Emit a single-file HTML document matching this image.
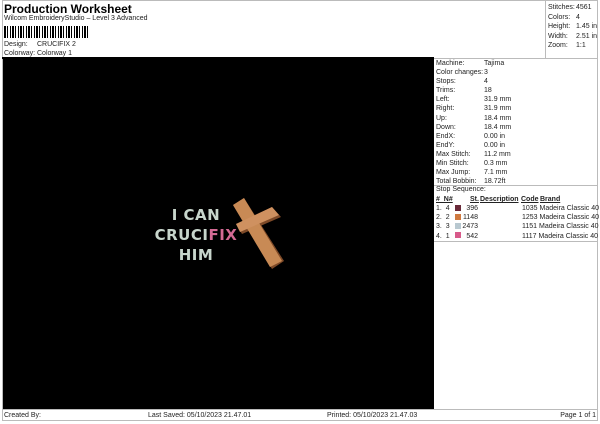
<!DOCTYPE html>
<html><head><style>
body{margin:0;width:600px;height:424px;background:#fff;font-family:"Liberation Sans",sans-serif;font-size:7px;color:#222;position:relative;overflow:hidden}
.a{position:absolute;white-space:nowrap}
.ln{position:absolute;background:#bbb}
</style></head><body>
<div class="a" style="left:4px;top:2px;font-size:12px;font-weight:bold;color:#000">Production Worksheet</div>
<div class="a" style="left:4px;top:15px">Wilcom EmbroideryStudio – Level 3 Advanced</div>
<div class="a" style="left:4px;top:26px;width:86px;height:12px;background:repeating-linear-gradient(90deg,#000 0 2px,#fff 2px 3px,#000 3px 4px,#fff 4px 6px,#000 6px 7px,#fff 7px 8px)"></div>
<div class="a" style="left:4px;top:41px">Design:</div><div class="a" style="left:37px;top:41px">CRUCIFIX 2</div>
<div class="a" style="left:4px;top:50px">Colorway:</div><div class="a" style="left:37px;top:50px">Colorway 1</div>
<div class="ln" style="left:2px;top:0;width:596px;height:1px"></div>
<div class="ln" style="left:2px;top:0;width:1px;height:421px"></div>
<div class="ln" style="left:597px;top:0;width:1px;height:421px"></div>
<div class="ln" style="left:545px;top:0;width:1px;height:58px"></div>
<div class="ln" style="left:2px;top:420px;width:596px;height:1px"></div>
<div class="ln" style="left:2px;top:409px;width:596px;height:1px"></div>
<div class="ln" style="left:434px;top:58px;width:164px;height:1px"></div>
<div class="ln" style="left:434px;top:185px;width:164px;height:1px"></div>
<div class="ln" style="left:434px;top:241px;width:164px;height:1px"></div>
<div class="a" style="left:2px;top:57px;width:432px;height:2px;background:#000"></div>
<div class="a" style="left:548px;top:3px;line-height:9.5px">Stitches:<br>Colors:<br>Height:<br>Width:<br>Zoom:</div>
<div class="a" style="left:576px;top:3px;line-height:9.5px">4561<br>4<br>1.45 in<br>2.51 in<br>1:1</div>
<div class="a" style="left:3px;top:59px;width:431px;height:350px;background:#000"></div>
<svg class="a" style="left:0;top:0" width="600" height="424">
<polygon points="233,205 244,198 284,261 272,269" fill="#7e4a28"/>
<polygon points="236,224 272,207 281,217 242,234" fill="#7e4a28"/>
<polygon points="233,205 244,198 282,261 270,267" fill="#c88a55"/>
<polygon points="236,224 272,207 279,215 240,232" fill="#cf9160"/>
</svg>
<div class="a" style="left:150px;top:205px;width:92px;text-align:center;font-size:15px;font-weight:bold;color:#c8d6cc;line-height:20px;letter-spacing:0.5px;font-family:'DejaVu Sans',sans-serif">I CAN<br>CRUCI<span style="color:#d46a94">FIX</span><br>HIM</div>
<div class="a" style="left:436px;top:59px;line-height:9.1px">Machine:<br>Color changes:<br>Stops:<br>Trims:<br>Left:<br>Right:<br>Up:<br>Down:<br>EndX:<br>EndY:<br>Max Stitch:<br>Min Stitch:<br>Max Jump:<br>Total Bobbin:</div>
<div class="a" style="left:484px;top:59px;line-height:9.1px">Tajima<br>3<br>4<br>18<br>31.9 mm<br>31.9 mm<br>18.4 mm<br>18.4 mm<br>0.00 in<br>0.00 in<br>11.2 mm<br>0.3 mm<br>7.1 mm<br>18.72ft</div>
<div class="a" style="left:436px;top:186px">Stop Sequence:</div>
<div class="a" style="left:436px;top:196px;font-weight:bold;text-decoration:underline">#&nbsp; N#</div>
<div class="a" style="left:470px;top:196px;font-weight:bold;text-decoration:underline;width:8px;text-align:right">St.</div>
<div class="a" style="left:480px;top:196px;font-weight:bold;text-decoration:underline">Description</div>
<div class="a" style="left:521px;top:196px;font-weight:bold;text-decoration:underline">Code</div>
<div class="a" style="left:540px;top:196px;font-weight:bold;text-decoration:underline">Brand</div>
<div class="a" style="left:436px;top:204px;line-height:9.2px">1.&nbsp; 4<br>2.&nbsp; 2<br>3.&nbsp; 3<br>4.&nbsp; 1</div>
<div class="a" style="left:455px;top:205px;width:6px;height:6px;background:#6a2a3a"></div>
<div class="a" style="left:455px;top:214px;width:6px;height:6px;background:#d07a40"></div>
<div class="a" style="left:455px;top:223px;width:6px;height:6px;background:#b8c8d0"></div>
<div class="a" style="left:455px;top:232px;width:6px;height:6px;background:#d85a8a"></div>
<div class="a" style="left:460px;top:204px;width:18px;text-align:right;line-height:9.2px">396<br>1148<br>2473<br>542</div>
<div class="a" style="left:522px;top:204px;line-height:9.2px">1035 Madeira Classic 40<br>1253 Madeira Classic 40<br>1151 Madeira Classic 40<br>1117 Madeira Classic 40</div>
<div class="a" style="left:4px;top:412px">Created By:</div>
<div class="a" style="left:148px;top:412px">Last Saved: 05/10/2023 21.47.01</div>
<div class="a" style="left:327px;top:412px">Printed: 05/10/2023 21.47.03</div>
<div class="a" style="right:4px;top:412px">Page 1 of 1</div>
</body></html>
